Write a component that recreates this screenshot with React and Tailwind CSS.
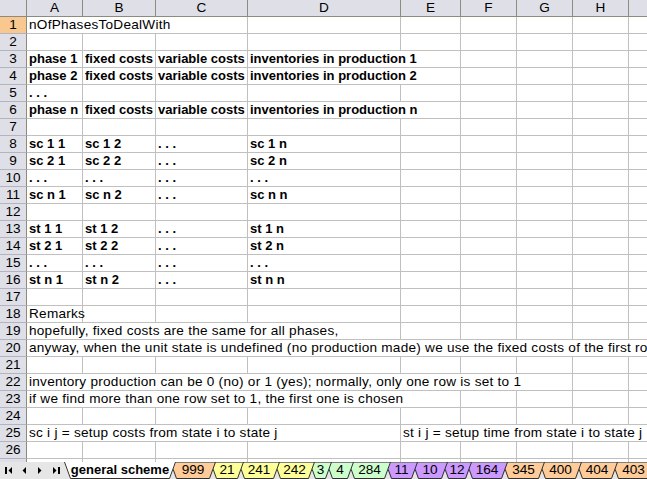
import React from 'react';

const GRID = 'grid grid-cols-[27px_56px_73px_92px_153px_60px_56px_56px_56px_56px] h-[17px]';
const SPAN = {
  1: 'col-span-1',
  2: 'col-span-2',
  3: 'col-span-3',
  4: 'col-span-4',
  5: 'col-span-5',
  6: 'col-span-6',
  7: 'col-span-7',
  8: 'col-span-8',
  9: 'col-span-9',
};
const LETTERS = ['A', 'B', 'C', 'D', 'E', 'F', 'G', 'H', 'I'];

const dots = '. . .';

const rows = [
  { n: 1, cells: [{ t: 'nOfPhasesToDealWith', span: 3 }] },
  { n: 2 },
  { n: 3, b: true, cells: [{ t: 'phase 1' }, { t: 'fixed costs' }, { t: 'variable costs' }, { t: 'inventories in production 1', span: 2 }] },
  { n: 4, b: true, cells: [{ t: 'phase 2' }, { t: 'fixed costs' }, { t: 'variable costs' }, { t: 'inventories in production 2', span: 2 }] },
  { n: 5, b: true, cells: [{ t: dots }] },
  { n: 6, b: true, cells: [{ t: 'phase n' }, { t: 'fixed costs' }, { t: 'variable costs' }, { t: 'inventories in production n', span: 2 }] },
  { n: 7 },
  { n: 8, b: true, cells: [{ t: 'sc 1 1' }, { t: 'sc 1 2' }, { t: dots }, { t: 'sc 1 n' }] },
  { n: 9, b: true, cells: [{ t: 'sc 2 1' }, { t: 'sc 2 2' }, { t: dots }, { t: 'sc 2 n' }] },
  { n: 10, b: true, cells: [{ t: dots }, { t: dots }, { t: dots }, { t: dots }] },
  { n: 11, b: true, cells: [{ t: 'sc n 1' }, { t: 'sc n 2' }, { t: dots }, { t: 'sc n n' }] },
  { n: 12 },
  { n: 13, b: true, cells: [{ t: 'st 1 1' }, { t: 'st 1 2' }, { t: dots }, { t: 'st 1 n' }] },
  { n: 14, b: true, cells: [{ t: 'st 2 1' }, { t: 'st 2 2' }, { t: dots }, { t: 'st 2 n' }] },
  { n: 15, b: true, cells: [{ t: dots }, { t: dots }, { t: dots }, { t: dots }] },
  { n: 16, b: true, cells: [{ t: 'st n 1' }, { t: 'st n 2' }, { t: dots }, { t: 'st n n' }] },
  { n: 17 },
  { n: 18, cells: [{ t: 'Remarks' }] },
  { n: 19, cells: [{ t: 'hopefully, fixed costs are the same for all phases,', span: 4 }] },
  { n: 20, cells: [{ t: 'anyway, when the unit state is undefined (no production made) we use the fixed costs of the first row', span: 9 }] },
  { n: 21 },
  { n: 22, cells: [{ t: 'inventory production can be 0 (no) or 1 (yes); normally, only one row is set to 1', span: 7 }] },
  { n: 23, cells: [{ t: 'if we find more than one row set to 1, the first one is chosen', span: 5 }] },
  { n: 24 },
  { n: 25, cells: [{ t: 'sc i j = setup costs from state i to state j', span: 4 }, { t: 'st i j = setup time from state i to state j', span: 5 }] },
  { n: 26 },
  { n: 27 },
];

const tabs = [
  { t: 'general scheme', w: 112, cls: 'w-[112px]', fill: '#ffffff', active: true },
  { t: '999', w: 46, cls: 'w-[46px]', fill: '#ffcc99' },
  { t: '21', w: 34, cls: 'w-[34px]', fill: '#ffff99' },
  { t: '241', w: 42, cls: 'w-[42px]', fill: '#ffff99' },
  { t: '242', w: 41, cls: 'w-[41px]', fill: '#ffff99' },
  { t: '3', w: 23, cls: 'w-[23px]', fill: '#ccffcc' },
  { t: '4', w: 28, cls: 'w-[28px]', fill: '#ccffcc' },
  { t: '284', w: 43, cls: 'w-[43px]', fill: '#ccffcc' },
  { t: '11', w: 33, cls: 'w-[33px]', fill: '#cc99ff' },
  { t: '10', w: 36, cls: 'w-[36px]', fill: '#cc99ff' },
  { t: '12', w: 30, cls: 'w-[30px]', fill: '#cc99ff' },
  { t: '164', w: 42, cls: 'w-[42px]', fill: '#cc99ff' },
  { t: '345', w: 43, cls: 'w-[43px]', fill: '#ffcc99' },
  { t: '400', w: 43, cls: 'w-[43px]', fill: '#ffcc99' },
  { t: '404', w: 42, cls: 'w-[42px]', fill: '#ffcc99' },
  { t: '403', w: 43, cls: 'w-[43px]', fill: '#ffcc99' },
];

function HeaderRow() {
  return (
    <div className={GRID}>
      <div className="bg-[#dfdfe7] border-r border-b border-[#8c8c7c]" />
      {LETTERS.map((l) => (
        <div key={l} className="bg-[#dfdfe7] border-r border-b border-[#8c8c7c] text-center leading-[16px]">
          {l}
        </div>
      ))}
    </div>
  );
}

function SheetRow({ row }) {
  const cells = row.cells ? [...row.cells] : [];
  let used = cells.reduce((s, c) => s + (c.span || 1), 0);
  while (used < 9) {
    cells.push({ t: '' });
    used++;
  }
  return (
    <div className={GRID}>
      <div
        className={`${row.n === 1 ? 'bg-[#f8c890]' : 'bg-[#dfdfe7]'} border-r border-r-[#8c8c7c] border-b border-b-[#b4b4c0] text-center leading-[16px]`}
      >
        {row.n}
      </div>
      {cells.map((c, i) => (
        <div
          key={i}
          className={`${SPAN[c.span || 1]} border-r border-b border-[#c0c0c0] pl-[2px] leading-[16px] whitespace-nowrap ${row.b ? 'font-bold text-[13px]' : 'tracking-[0.25px]'}`}
        >
          {c.t}
        </div>
      ))}
    </div>
  );
}

function NavButtons() {
  return (
    <div className="flex w-[64px] shrink-0">
      <div className="w-[16px] h-[17px]">
        <svg width="16" height="17">
          <rect x="5" y="5" width="2" height="7" fill="#000" />
          <polygon points="12,5 12,12 8.5,8.5" fill="#000" />
        </svg>
      </div>
      <div className="w-[16px] h-[17px]">
        <svg width="16" height="17">
          <polygon points="10,5 10,12 6.5,8.5" fill="#000" />
        </svg>
      </div>
      <div className="w-[16px] h-[17px]">
        <svg width="16" height="17">
          <polygon points="6,5 6,12 9.5,8.5" fill="#000" />
        </svg>
      </div>
      <div className="w-[16px] h-[17px]">
        <svg width="16" height="17">
          <polygon points="5,5 5,12 8.5,8.5" fill="#000" />
          <rect x="10" y="5" width="2" height="7" fill="#000" />
        </svg>
      </div>
    </div>
  );
}

function Tab({ tab, i }) {
  const w = tab.w;
  return (
    <div
      className={`relative h-[17px] shrink-0 ${tab.cls} ${i > 0 ? '-ml-[6px]' : ''}`}
      style={{ zIndex: 60 - i }}
    >
      <svg className="absolute left-0 top-0" width={w} height="17">
        <polygon points={`0,0 ${w},0 ${w - 6},16.5 6,16.5`} fill={tab.fill} />
        {!tab.active && <line x1="0" y1="0.5" x2={w} y2="0.5" stroke="#808080" />}
        <polyline
          points={`0.5,0 6.5,16.5 ${w - 6.5},16.5 ${w - 0.5},0`}
          fill="none"
          stroke="#303030"
        />
      </svg>
      <div className={`relative text-center leading-[16px] ${tab.active ? 'font-bold text-[13px]' : ''}`}>{tab.t}</div>
    </div>
  );
}

function TabBar() {
  return (
    <div className="h-[17px] flex bg-[#e6e6e6] overflow-hidden shrink-0">
      <NavButtons />
      <div className="flex">
        {tabs.map((t, i) => (
          <Tab key={t.t} tab={t} i={i} />
        ))}
      </div>
    </div>
  );
}

export default function App() {
  return (
    <div className="w-[647px] h-[479px] overflow-hidden bg-white flex flex-col text-black text-[13.6px] font-['Liberation_Sans',Arial,sans-serif]">
      <div className="h-[462px] overflow-hidden shrink-0">
        <HeaderRow />
        {rows.map((r) => (
          <SheetRow key={r.n} row={r} />
        ))}
      </div>
      <TabBar />
    </div>
  );
}
